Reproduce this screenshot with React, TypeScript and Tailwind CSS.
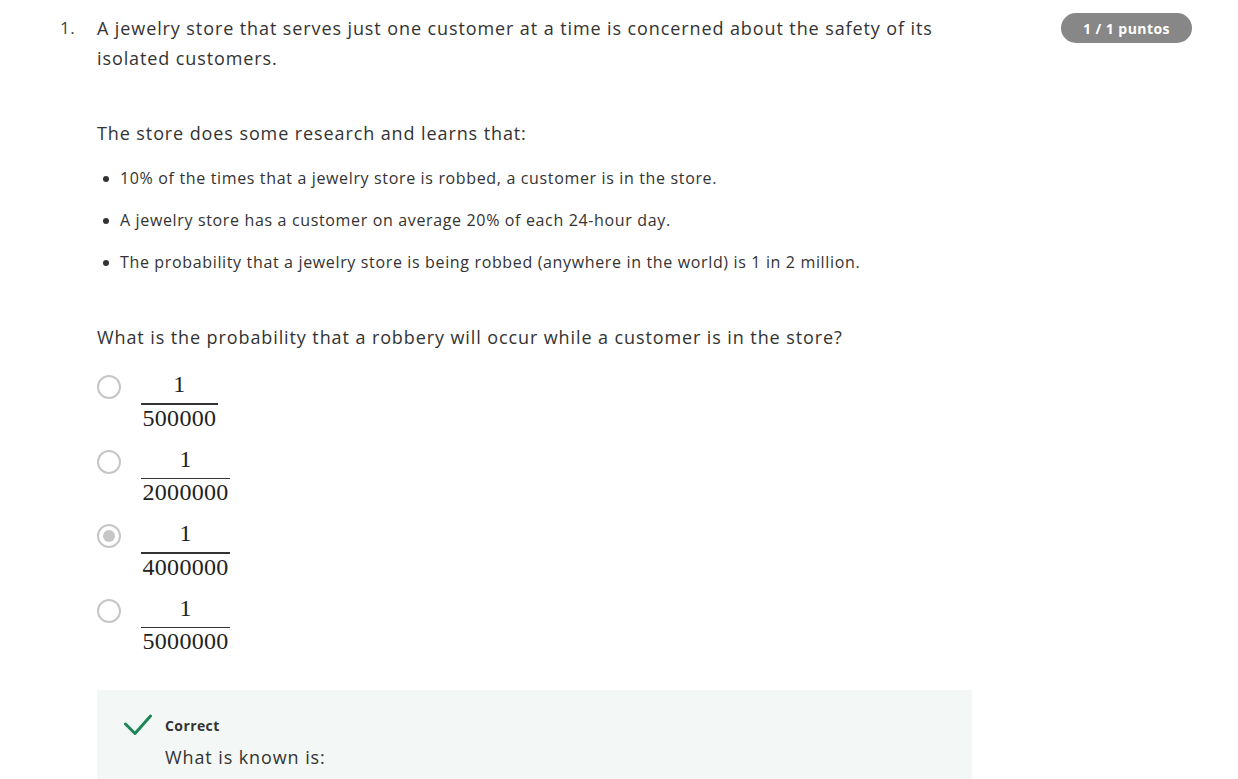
const options = [
  { den: '500000', selected: false },
  { den: '2000000', selected: false },
  { den: '4000000', selected: true },
  { den: '5000000', selected: false },
];

const facts = [
  '10% of the times that a jewelry store is robbed, a customer is in the store.',
  'A jewelry store has a customer on average 20% of each 24-hour day.',
  'The probability that a jewelry store is being robbed (anywhere in the world) is 1 in 2 million.',
];

function Radio({ selected }: { selected: boolean }) {
  return (
    <span className="mt-[4px] flex h-[24px] w-[24px] shrink-0 items-center justify-center rounded-full border-[2.5px] border-[#c6c6c6] bg-white">
      {selected && <span className="h-[12px] w-[12px] rounded-full bg-[#c6c6c6]" />}
    </span>
  );
}

function Fraction({ den }: { den: string }) {
  return (
    <span
      className="inline-flex flex-col items-stretch text-[24px] leading-[26px] text-[#222] tracking-[0.3px]"
      style={{ fontFamily: '"Liberation Serif", "DejaVu Serif", serif' }}
    >
      <span className="text-center">1</span>
      <span className="mt-[6px] h-[1.5px] bg-[#333]" />
      <span className="px-[1.5px] text-center">{den}</span>
    </span>
  );
}

export default function App() {
  return (
    <div
      className="min-h-screen bg-white text-[#333]"
      style={{ fontFamily: '"Open Sans", "Noto Sans", sans-serif' }}
    >
      <div className="flex items-start pl-[60px] pr-[46px] pt-[13px]">
        <span className="w-[37px] shrink-0 text-[17px] leading-[30px] tracking-[0.6px] text-[#444]">1.</span>

        <div className="w-[875px] shrink-0">
          <p className="text-[18px] leading-[30px] tracking-[0.9px]">
            A jewelry store that serves just one customer at a time is concerned about the safety of its isolated customers.
          </p>

          <p className="mt-[45px] text-[18px] leading-[30px] tracking-[0.9px]">
            The store does some research and learns that:
          </p>

          <ul className="mt-[18px] flex flex-col gap-[18px] pl-[23px]">
            {facts.map((f) => (
              <li key={f} className="relative text-[16px] leading-[24px] tracking-[0.65px]">
                <span className="absolute left-[-17px] top-[10px] h-[6px] w-[6px] rounded-full bg-[#333]" />
                {f}
              </li>
            ))}
          </ul>

          <p className="mt-[48px] text-[18px] leading-[30px] tracking-[0.9px]">
            What is the probability that a robbery will occur while a customer is in the store?
          </p>

          <div className="mt-[19px] flex flex-col gap-[15px]">
            {options.map((o) => (
              <label key={o.den} className="flex items-start gap-[20px]">
                <Radio selected={o.selected} />
                <Fraction den={o.den} />
              </label>
            ))}
          </div>

          <div className="mt-[36px] bg-[#f3f8f6] pl-[27px] pt-[23px] pb-[10px]">
            <div className="flex items-start gap-[13px]">
              <svg width="28" height="22" viewBox="0 0 28 22" className="mt-[1px] shrink-0">
                <polyline
                  points="1.5,10 11,19.5 26.5,2"
                  fill="none"
                  stroke="#1e8656"
                  strokeWidth="3"
                  strokeLinecap="round"
                  strokeLinejoin="round"
                />
              </svg>
              <div>
                <div className="text-[14px] font-bold leading-[26px] tracking-[0.4px] text-[#333]">Correct</div>
                <div className="mt-[3px] text-[18px] leading-[30px] tracking-[0.9px] text-[#333]">
                  What is known is:
                </div>
              </div>
            </div>
          </div>
        </div>

        <div className="ml-auto flex h-[30px] items-center rounded-full bg-[#878787] px-[22px] text-[14px] font-bold tracking-[0.45px] text-white">
          1 / 1 puntos
        </div>
      </div>
    </div>
  );
}
